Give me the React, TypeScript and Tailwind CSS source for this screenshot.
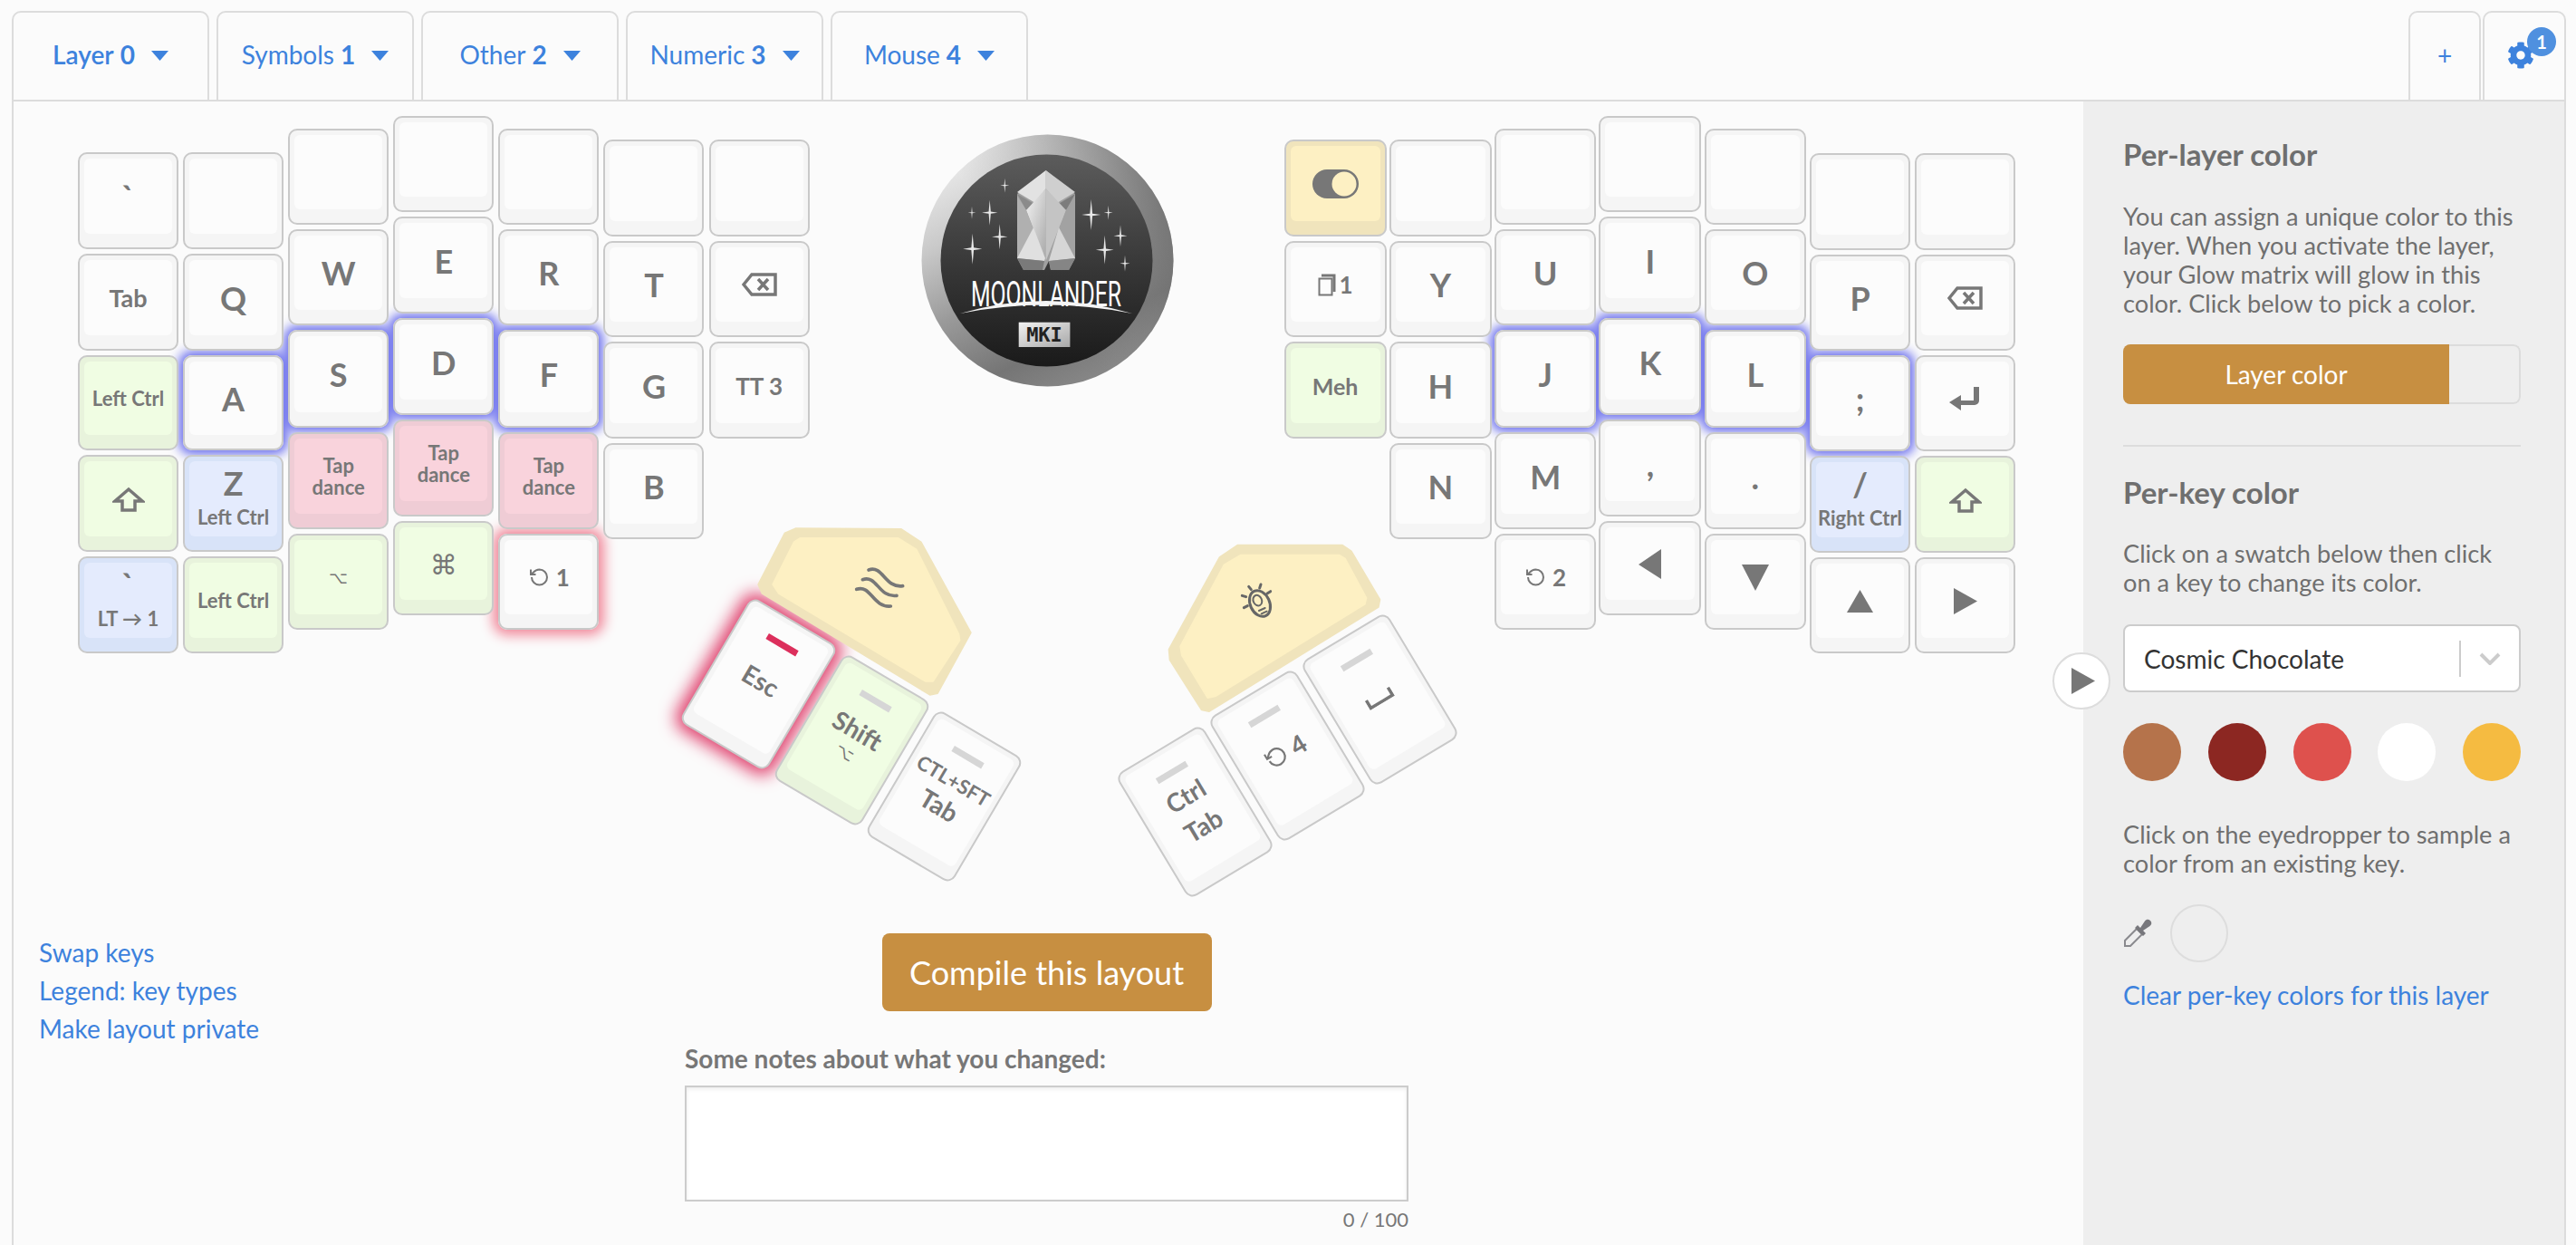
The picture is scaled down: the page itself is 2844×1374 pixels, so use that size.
import React from "react";
import { FaCog } from "react-icons/fa";

const tones: Record<string, { outer: string; inner: string }> = {
  plain: { outer: "bg-[#f5f5f5]", inner: "bg-[#fcfcfc]" },
  green: { outer: "bg-[#e8f3dc]", inner: "bg-[#f0fde3]" },
  pink: { outer: "bg-[#efccd5]", inner: "bg-[#f9d3dc]" },
  blue: { outer: "bg-[#d8e3f8]", inner: "bg-[#e4ebfd]" },
  yellow: { outer: "bg-[#f0e4bc]", inner: "bg-[#fdf0c3]" },
};
const glows: Record<string, string> = {
  blue: "shadow-[0_0_12px_5px_#6f73ee]",
  red: "shadow-[0_0_14px_6px_#f1899b]",
};

type KeyDef = { h: string; tone?: string; glow?: string; node?: React.ReactNode };

function Big({ children }: { children: React.ReactNode }) {
  return <span className="text-[36px] leading-[40px] font-bold">{children}</span>;
}
function Small({ children }: { children: React.ReactNode }) {
  return <span className="text-[22px] leading-[24px] font-bold">{children}</span>;
}
function Dual({ main, sub }: { main: React.ReactNode; sub: React.ReactNode }) {
  return (
    <span className="flex h-full flex-col items-center pt-[4px]">
      <span className="h-[40px] text-[36px] leading-[40px] font-bold">{main}</span>
      <span className="mt-[6px] text-[22px] leading-[24px] font-bold whitespace-nowrap">{sub}</span>
    </span>
  );
}
function Undo({ size = 24 }: { size?: number }) {
  return (
    <svg width={size} height={size} viewBox="0 0 24 24" fill="none" stroke="#777" strokeWidth="2">
      <path d="M4 12a8.5 8.5 0 1 0 8.5-8.5A9 9 0 0 0 6 6.500L3.500 9" />
      <path d="M3 3.500V9h5.500" />
    </svg>
  );
}
function UndoN({ n }: { n: string }) {
  return (
    <span className="flex items-center gap-[7px]">
      <Undo />
      <span className="text-[26px] leading-[30px] font-bold">{n}</span>
    </span>
  );
}
function Backspace() {
  return (
    <svg width="39" height="26" viewBox="0 0 39 26" fill="none" stroke="#777" strokeWidth="3.500">
      <path d="M37 2H11L2 13l9 11h26z" />
      <path d="M18 7l11 12M29 7L18 19" />
    </svg>
  );
}
function ShiftIcon() {
  return (
    <svg width="36" height="28" viewBox="0 0 36 28" fill="none" stroke="#777" strokeWidth="3.500">
      <path d="M18 3L3 16h8v10h14V16h8z" />
    </svg>
  );
}
function EnterIcon() {
  return (
    <svg width="38" height="28" viewBox="0 0 38 28" fill="#777">
      <path d="M34 1v15a5 5 0 0 1-5 5H14v6L1 18 14 10v6h14V1z" />
    </svg>
  );
}
function Tri({ w, h, pts }: { w: number; h: number; pts: string }) {
  return (
    <svg width={w} height={h} viewBox={`0 0 ${w} ${h}`} fill="#777">
      <polygon points={pts} />
    </svg>
  );
}
function Toggle() {
  return (
    <svg width="51" height="32" viewBox="0 0 51 32">
      <rect width="51" height="32" rx="16" fill="#777" />
      <circle cx="35" cy="16" r="13.500" fill="#fdf0c3" />
    </svg>
  );
}
function Copy() {
  return (
    <span className="flex items-center gap-[4px]">
      <svg width="20" height="25" viewBox="0 0 20 25" fill="none" stroke="#777" strokeWidth="2">
        <rect x="1.500" y="5.500" width="14" height="18" />
        <path d="M4 2h14v18" strokeWidth="3" />
      </svg>
      <span className="text-[26px] leading-[30px] font-bold">1</span>
    </span>
  );
}

function Key({ h, tone = "plain", glow, node, w = "w-full" }: KeyDef & { w?: string }) {
  const t = tones[tone];
  return (
    <div className={`relative shrink-0 ${h} ${w}`}>
      {glow && <div className={`absolute inset-0 rounded-[10px] ${glows[glow]}`} />}
      <div className={`relative z-10 flex h-full rounded-[10px] border-2 border-[#c9c9c9] px-[5px] pt-[5px] pb-[15px] ${t.outer}`}>
        <div className={`flex min-w-0 flex-1 items-center justify-center rounded-[6px] text-center text-[#777] ${t.inner}`}>{node}</div>
      </div>
    </div>
  );
}

const H104 = "h-[104px]", H105 = "h-[105px]", H106 = "h-[106px]", H107 = "h-[107px]", H108 = "h-[108px]";

type Col = { cls: string; keys: KeyDef[] };
const tap = (
  <Small>
    Tap
    <br />
    dance
  </Small>
);
const leftCols: Col[] = [
  {
    cls: "mt-[40px] w-[111px]",
    keys: [
      { h: H107, node: <Big>`</Big> },
      { h: H107, node: <span className="text-[27px] leading-[28px] font-bold">Tab</span> },
      { h: H105, tone: "green", node: <Small>Left Ctrl</Small> },
      { h: H107, tone: "green", node: <ShiftIcon /> },
      { h: H107, tone: "blue", node: <Dual main="`" sub="LT → 1" /> },
    ],
  },
  {
    cls: "mt-[40px] w-[111px]",
    keys: [
      { h: H107 },
      { h: H107, node: <Big>Q</Big> },
      { h: H105, glow: "blue", node: <Big>A</Big> },
      { h: H107, tone: "blue", node: <Dual main="Z" sub="Left Ctrl" /> },
      { h: H107, tone: "green", node: <Small>Left Ctrl</Small> },
    ],
  },
  {
    cls: "mt-[14px] w-[111px]",
    keys: [
      { h: H106 },
      { h: H106, node: <Big>W</Big> },
      { h: H108, glow: "blue", node: <Big>S</Big> },
      { h: H107, tone: "pink", node: tap },
      { h: H106, tone: "green", node: <span className="text-[18px]">⌥</span> },
    ],
  },
  {
    cls: "w-[111px]",
    keys: [
      { h: H106 },
      { h: H107, node: <Big>E</Big> },
      { h: H107, glow: "blue", node: <Big>D</Big> },
      { h: H107, tone: "pink", node: tap },
      { h: H104, tone: "green", node: <span className="text-[30px]">⌘</span> },
    ],
  },
  {
    cls: "mt-[14px] w-[111px]",
    keys: [
      { h: H106 },
      { h: H106, node: <Big>R</Big> },
      { h: H108, glow: "blue", node: <Big>F</Big> },
      { h: H107, tone: "pink", node: tap },
      { h: H106, glow: "red", node: <UndoN n="1" /> },
    ],
  },
  {
    cls: "mt-[26px] w-[111px]",
    keys: [
      { h: H107 },
      { h: H106, node: <Big>T</Big> },
      { h: H107, node: <Big>G</Big> },
      { h: H106, node: <Big>B</Big> },
    ],
  },
  {
    cls: "mt-[26px] w-[111px]",
    keys: [
      { h: H107 },
      { h: H106, node: <Backspace /> },
      { h: H107, node: <span className="text-[26px] leading-[28px] font-bold">TT 3</span> },
    ],
  },
];
const rightCols: Col[] = [
  {
    cls: "mt-[26px] w-[113px]",
    keys: [
      { h: H107, tone: "yellow", node: <Toggle /> },
      { h: H106, node: <Copy /> },
      { h: H107, tone: "green", node: <span className="text-[25px] leading-[28px] font-bold">Meh</span> },
    ],
  },
  {
    cls: "mt-[26px] w-[113px]",
    keys: [
      { h: H107 },
      { h: H106, node: <Big>Y</Big> },
      { h: H107, node: <Big>H</Big> },
      { h: H106, node: <Big>N</Big> },
    ],
  },
  {
    cls: "mt-[14px] w-[112px]",
    keys: [
      { h: H106 },
      { h: H106, node: <Big>U</Big> },
      { h: H108, glow: "blue", node: <Big>J</Big> },
      { h: H107, node: <Big>M</Big> },
      { h: H106, node: <UndoN n="2" /> },
    ],
  },
  {
    cls: "w-[113px]",
    keys: [
      { h: H106 },
      { h: H107, node: <Big>I</Big> },
      { h: H107, glow: "blue", node: <Big>K</Big> },
      { h: H107, node: <Big>,</Big> },
      { h: H104, node: <Tri w={25} h={33} pts="25,0 0,17 25,33" /> },
    ],
  },
  {
    cls: "mt-[14px] w-[112px]",
    keys: [
      { h: H106 },
      { h: H106, node: <Big>O</Big> },
      { h: H108, glow: "blue", node: <Big>L</Big> },
      { h: H107, node: <Big>.</Big> },
      { h: H106, node: <Tri w={30} h={29} pts="0,0 30,0 15,29" /> },
    ],
  },
  {
    cls: "mt-[41px] ml-[1px] w-[111px]",
    keys: [
      { h: H107 },
      { h: H106, node: <Big>P</Big> },
      { h: H106, glow: "blue", node: <Big>;</Big> },
      { h: H107, tone: "blue", node: <Dual main="/" sub="Right Ctrl" /> },
      { h: H106, node: <Tri w={29} h={25} pts="14.500,0 29,25 0,25" /> },
    ],
  },
  {
    cls: "mt-[41px] ml-[2px] w-[111px]",
    keys: [
      { h: H107 },
      { h: H106, node: <Backspace /> },
      { h: H106, node: <EnterIcon /> },
      { h: H107, tone: "green", node: <ShiftIcon /> },
      { h: H106, node: <Tri w={26} h={29} pts="0,0 26,14.500 0,29" /> },
    ],
  },
];

function Hand({ cols, gap }: { cols: Col[]; gap: string }) {
  return (
    <div className={`flex items-start ${gap}`}>
      {cols.map((c, i) => (
        <div key={i} className={`flex shrink-0 flex-col gap-[5px] ${c.cls}`}>
          {c.keys.map((k, j) => (
            <Key key={j} {...k} />
          ))}
        </div>
      ))}
    </div>
  );
}

function Star({ x, y, r }: { x: number; y: number; r: number }) {
  const a = r * 0.08;
  const b = r * 0.62;
  return (
    <path
      fill="#e8e8e8"
      d={`M${x} ${y - r}L${x + a} ${y - a}L${x + b} ${y}L${x + a} ${y + a}L${x} ${y + r}L${x - a} ${y + a}L${x - b} ${y}L${x - a} ${y - a}Z`}
    />
  );
}

function Logo() {
  return (
    <svg width="279" height="279" viewBox="0 0 279 279" className="shrink-0">
      <defs>
        <linearGradient id="ring" x1="0.2" y1="0" x2="0.7" y2="1">
          <stop offset="0" stopColor="#f2f2f2" />
          <stop offset="0.3" stopColor="#c9c9c9" />
          <stop offset="0.55" stopColor="#9a9a9a" />
          <stop offset="0.8" stopColor="#757575" />
          <stop offset="1" stopColor="#8a8a8a" />
        </linearGradient>
        <linearGradient id="ring2" x1="0.95" y1="0.1" x2="0.4" y2="0.5">
          <stop offset="0" stopColor="#5a5a5a" stopOpacity="0.75" />
          <stop offset="1" stopColor="#999" stopOpacity="0" />
        </linearGradient>
        <linearGradient id="disc" x1="0" y1="0" x2="0" y2="1">
          <stop offset="0" stopColor="#5c5c5c" />
          <stop offset="0.55" stopColor="#363636" />
          <stop offset="1" stopColor="#1a1a1a" />
        </linearGradient>
        <linearGradient id="shard" x1="0" y1="0" x2="1" y2="1">
          <stop offset="0" stopColor="#f4f4f4" />
          <stop offset="1" stopColor="#a8a8a8" />
        </linearGradient>
        <linearGradient id="plate" x1="0" y1="0" x2="1" y2="1">
          <stop offset="0" stopColor="#f2f2f2" />
          <stop offset="1" stopColor="#a8a8a8" />
        </linearGradient>
      </defs>
      <circle cx="139.500" cy="139.500" r="139" fill="url(#ring)" />
      <circle cx="139.500" cy="139.500" r="139" fill="url(#ring2)" />
      <circle cx="138.500" cy="139.500" r="117" fill="url(#disc)" />
      {[
        [92.3, 56.7, 8], [56, 86.7, 7], [75.7, 86.7, 14], [86.7, 113.3, 14], [56.7, 126.7, 17],
        [187.7, 89, 17], [206.7, 86.7, 8], [220, 112.3, 12], [202.7, 127.7, 16], [225, 142.7, 9],
      ].map(([x, y, r], i) => (
        <Star key={i} x={x} y={y} r={r} />
      ))}
      <polygon points="137.700,40 106,66 106,137 113,150 136,150 141,140 143,150 163,150 170,137 170,66" fill="#a0a0a0" />
      <polygon points="137.700,40 106,64 126,76 137.700,60" fill="#e2e2e2" />
      <polygon points="137.700,40 170,64 150,76 137.700,60" fill="#cfcfcf" />
      <polygon points="106,66 126,78 116,84" fill="#8a8a8a" />
      <polygon points="170,66 150,78 160,84" fill="#7c7c7c" />
      <polygon points="137.700,60 116,84 137.700,140" fill="url(#shard)" />
      <polygon points="137.700,60 160,84 137.700,140" fill="#c4c4c4" />
      <polygon points="106,68 116,84 128,116 106,137" fill="#b0b0b0" />
      <polygon points="170,68 160,84 148,116 170,137" fill="#a2a2a2" />
      <polygon points="106,137 124,103 137,137 136,140" fill="#e0e0e0" />
      <polygon points="170,137 152,103 141,140" fill="#d6d6d6" />
      <polygon points="106,137 136,140 134,150 113,150" fill="#7a7a7a" />
      <polygon points="170,137 141,140 143,150 163,150" fill="#858585" />
      <text x="55" y="190" textLength="166" lengthAdjust="spacingAndGlyphs" fill="#ffffff" fontFamily="Roboto, sans-serif" fontSize="38" fontWeight="400">
        MOONLANDER
      </text>
      <path d="M43 198Q138 170 233 198Q138 179 43 198Z" fill="#f5f5f5" />
      <rect x="107.700" y="207.700" width="56.700" height="27.300" fill="url(#plate)" />
      <text x="136" y="229" textAnchor="middle" fill="#222" fontFamily="'DejaVu Sans Mono', monospace" fontSize="22" fontWeight="700">
        MKI
      </text>
    </svg>
  );
}

function ThumbKey({
  pos,
  rot,
  tone = "plain",
  glow,
  bar = "bg-[#d6d6d6]",
  children,
}: {
  pos: string;
  rot: string;
  tone?: string;
  glow?: boolean;
  bar?: string;
  children?: React.ReactNode;
}) {
  const t = tones[tone];
  return (
    <div className={`absolute h-[160px] w-[111px] rounded-[10px] border-2 border-[#c9c9c9] px-[5px] pt-[5px] pb-[15px] ${pos} ${rot} ${t.outer} ${glow ? "shadow-[0_0_18px_7px_#e0436f]" : ""}`}>
      <div className={`flex h-full flex-col items-center rounded-[6px] text-[#777] ${t.inner}`}>
        <div className={`mt-[19px] h-[7px] w-[38px] shrink-0 ${bar}`} />
        {children}
      </div>
    </div>
  );
}

const LEFT = "rotate-[30.500deg]";
const RIGHT = "-rotate-[31deg]";

function Thumbs() {
  return (
    <>
      <ThumbKey pos="left-[767px] top-[563px]" rot={LEFT} glow bar="bg-[#dc2f5c]">
        <span className="mt-[27px] text-[28px] leading-[30px] font-bold">Esc</span>
      </ThumbKey>
      <svg className="absolute top-[458px] left-[705px]" width="460" height="440" viewBox="0 0 1380 1320">
        <polygon points="475,40 825,42 890,85 1055,385 945,585 920,590 365,255 352,225 440,55" fill="#f0e4bc" stroke="#f0e4bc" strokeWidth="6" strokeLinejoin="round" />
        <polygon points="490,72 815,72 875,110 1015,390 1018,410 930,545 905,545 420,255 400,225 470,85" fill="#fdf0c3" stroke="#fdf0c3" strokeWidth="6" strokeLinejoin="round" />
        <g fill="none" stroke="#777" strokeWidth="11" strokeLinecap="round">
          <path d="M717 177C765 160 770 238 830 230" />
          <path d="M697 209C745 192 750 270 810 262" />
          <path d="M677 241C725 224 730 302 790 297" />
        </g>
      </svg>
      <ThumbKey pos="left-[869.500px] top-[624.700px]" rot={LEFT} tone="green">
        <span className="mt-[19px] text-[28px] leading-[30px] font-bold">Shift</span>
        <span className="mt-[1px] text-[18px] leading-[24px]">⌥</span>
      </ThumbKey>
      <ThumbKey pos="left-[971.500px] top-[686.700px]" rot={LEFT}>
        <span className="mt-[15px] text-[22px] leading-[24px] font-bold whitespace-nowrap">CTL+SFT</span>
        <span className="mt-[3px] text-[28px] leading-[32px] font-bold">Tab</span>
      </ThumbKey>

      <svg className="absolute top-[448px] left-[1205px]" width="420" height="440" viewBox="0 0 1260 1320">
        <polygon points="440,125 785,125 815,145 910,305 905,330 345,675 320,670 215,505 212,470 380,165" fill="#f0e4bc" stroke="#f0e4bc" strokeWidth="6" strokeLinejoin="round" />
        <polygon points="450,158 775,158 795,170 865,300 860,320 365,625 340,630 255,490 250,460 395,190" fill="#fdf0c3" stroke="#fdf0c3" strokeWidth="6" strokeLinejoin="round" />
        <g fill="none" stroke="#666" strokeWidth="9" strokeLinecap="round">
          <ellipse cx="513" cy="318" rx="32" ry="45" transform="rotate(-25 513 318)" />
          <ellipse cx="505" cy="308" rx="14" ry="18" strokeWidth="6" transform="rotate(-25 505 308)" />
          <path d="M510 342L530 333M518 352L536 344" strokeWidth="6" />
          <path d="M476 262L484 272M516 255L512 267M548 278L537 285M454 292L467 296M460 332L472 326" />
        </g>
      </svg>
      <ThumbKey pos="left-[1249px] top-[704.300px]" rot={RIGHT}>
        <span className="mt-[9px] text-[28px] leading-[34px] font-bold">Ctrl</span>
        <span className="mt-[4px] text-[28px] leading-[34px] font-bold">Tab</span>
      </ThumbKey>
      <ThumbKey pos="left-[1351.200px] top-[642.200px]" rot={RIGHT}>
        <span className="mt-[27px] flex items-center gap-[7px]">
          <Undo size={26} />
          <span className="text-[28px] leading-[30px] font-bold">4</span>
        </span>
      </ThumbKey>
      <ThumbKey pos="left-[1453.300px] top-[580.200px]" rot={RIGHT}>
        <svg className="mt-[40px]" width="32" height="12" viewBox="0 0 32 12" fill="none" stroke="#777" strokeWidth="3.500">
          <path d="M2 0v10h28V0" />
        </svg>
      </ThumbKey>
    </>
  );
}

function Tab({ name, n, active }: { name: string; n: string; active?: boolean }) {
  return (
    <div className="flex h-[100px] w-[218px] items-center justify-center gap-[18px] rounded-t-[10px] border-2 border-[#dcdcdc] pb-[4px] text-[#3d82dd]">
      <span className={`flex gap-[7px] text-[28px] leading-[34px] whitespace-nowrap ${active ? "font-semibold" : ""}`}>
        {name}
        <span className="font-bold">{n}</span>
      </span>
      <Tri2 />
    </div>
  );
}
function Tri2() {
  return (
    <svg width="19" height="11" viewBox="0 0 19 11" fill="#3d82dd" className="mt-[3px]">
      <polygon points="0,0 19,0 9.500,11" />
    </svg>
  );
}

function Eyedropper() {
  return (
    <svg width="32" height="32" viewBox="0 0 32 32">
      <path d="M2 30L2 24L15 11L21 17L8 30Z" fill="none" stroke="#8a8a8e" strokeWidth="2" />
      <path d="M16 7L19 10L24 2.500C25.500 0.500 28 0 30 2C32 4 31.500 6.500 29.500 8L22 13L25 16L22 19L13 10Z" fill="#77777c" />
    </svg>
  );
}

export default function App() {
  return (
    <div className="flex h-[1374px] w-[2844px] flex-col overflow-hidden bg-[#fbfbfb] pt-[12px] pr-[11px] pl-[13px] font-[Lato,'DejaVu_Sans',sans-serif]">
      <div className="flex h-[100px] shrink-0 items-start gap-[8px] border-b-2 border-[#dcdcdc]">
        <Tab name="Layer" n="0" active />
        <Tab name="Symbols" n="1" />
        <Tab name="Other" n="2" />
        <Tab name="Numeric" n="3" />
        <Tab name="Mouse" n="4" />
        <div className="ml-auto flex h-[100px] w-[80px] items-center justify-center rounded-t-[10px] border-2 border-[#dcdcdc] pb-[2px] text-[28px] text-[#3d82dd]">
          +
        </div>
        <div className="relative -ml-[6px] flex h-[100px] w-[92px] items-center justify-center rounded-t-[10px] border-2 border-[#dcdcdc]">
          <FaCog className="mr-[8px] mb-[2px] text-[#3d82dd]" size={30} />
          <span className="absolute top-[16px] left-[47px] flex h-[32px] w-[32px] items-center justify-center rounded-full bg-[#4f90df] text-[20px] leading-none font-bold text-white">
            1
          </span>
        </div>
      </div>

      <div className="flex min-h-0 flex-1 border-x-2 border-[#dcdcdc]">
        <div className="relative flex w-[2285px] shrink-0 flex-col">
          <div className="flex h-[918px] shrink-0 items-start pt-[16px] pl-[71px]">
            <Hand cols={leftCols} gap="gap-[5.100px]" />
            <div className="mt-[20px] ml-[123px]">
              <Logo />
            </div>
            <div className="ml-[122px]">
              <Hand cols={rightCols} gap="gap-[3.300px]" />
            </div>
          </div>
          <Thumbs />
          <div className="flex">
            <div className="flex w-[741px] shrink-0 flex-col pl-[28px] text-[28px] leading-[42px] text-[#3d82dd]">
              <span>Swap keys</span>
              <span>Legend: key types</span>
              <span>Make layout private</span>
            </div>
            <div className="flex w-[799px] shrink-0 flex-col">
              <div className="mx-auto flex h-[86px] w-[364px] items-center justify-center rounded-[8px] bg-[#c78f41] text-[36px] text-white">
                Compile this layout
              </div>
              <div className="mt-[35px] text-[28px] leading-[34px] font-bold text-[#777]">Some notes about what you changed:</div>
              <textarea className="mt-[13px] h-[128px] w-full resize-none border-2 border-[#ccc] bg-white shadow-[inset_0_2px_4px_rgba(0,0,0,0.08)]" />
              <div className="mt-[8px] text-right text-[22px] leading-[24px] text-[#777]">0 / 100</div>
            </div>
          </div>
        </div>

        <div className="relative w-[531px] shrink-0 bg-[#eeeeee] pt-[38px] pr-[48px] pl-[44px] text-[#6f6f6f]">
          <div className="absolute top-[608px] -left-[34px] flex h-[63px] w-[64px] items-center justify-center rounded-full border-2 border-[#ddd] bg-white">
            <svg width="26" height="29" viewBox="0 0 26 29" fill="#777" className="ml-[4px]">
              <polygon points="0,0 26,14.500 0,29" />
            </svg>
          </div>
          <h2 className="text-[33px] leading-[40px] font-bold">Per-layer color</h2>
          <p className="mt-[33px] text-[27.200px] leading-[32px]">
            You can assign a unique color to this layer. When you activate the layer, your Glow matrix will glow in this color. Click below to pick a color.
          </p>
          <div className="mt-[29px] flex h-[66px] overflow-hidden rounded-[8px]">
            <div className="flex w-[360px] items-center justify-center bg-[#c78f41] text-[28px] text-white">Layer color</div>
            <div className="flex-1 rounded-r-[8px] border-2 border-l-0 border-[#dcdcdc]" />
          </div>
          <div className="mt-[45px] h-[2px] bg-[#dcdcdc]" />
          <h2 className="mt-[30px] text-[33px] leading-[40px] font-bold">Per-key color</h2>
          <p className="mt-[32px] text-[27.200px] leading-[32px]">Click on a swatch below then click on a key to change its color.</p>
          <div className="mt-[30px] flex h-[75px] items-center rounded-[8px] border-2 border-[#ccc] bg-white pl-[21px] text-[28px] text-[#333]">
            <span className="flex-1">Cosmic Chocolate</span>
            <span className="h-[40px] w-[2px] bg-[#ccc]" />
            <svg width="64" height="14" viewBox="0 0 64 14" fill="none" stroke="#ccc" strokeWidth="4">
              <path d="M22 2l10 10 10-10" />
            </svg>
          </div>
          <div className="mt-[34px] flex justify-between">
            <span className="h-[64px] w-[64px] rounded-full bg-[#b5734b]" />
            <span className="h-[64px] w-[64px] rounded-full bg-[#8c2722]" />
            <span className="h-[64px] w-[64px] rounded-full bg-[#de514d]" />
            <span className="h-[64px] w-[64px] rounded-full bg-white" />
            <span className="h-[64px] w-[64px] rounded-full bg-[#f5bb41]" />
          </div>
          <p className="mt-[43px] text-[27.200px] leading-[32px]">Click on the eyedropper to sample a color from an existing key.</p>
          <div className="mt-[29px] flex items-center gap-[20px]">
            <Eyedropper />
            <span className="h-[64px] w-[64px] rounded-full border-2 border-[#ddd]" />
          </div>
          <div className="mt-[19px] text-[28px] leading-[34px] text-[#3d82dd]">Clear per-key colors for this layer</div>
        </div>
      </div>
    </div>
  );
}
